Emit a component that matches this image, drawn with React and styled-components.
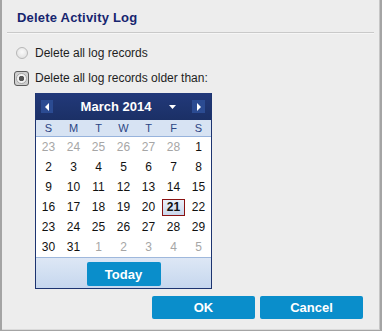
import React from 'react'
import styled, { createGlobalStyle } from 'styled-components'

const GlobalStyle = createGlobalStyle`
  html, body {
    margin: 0;
    padding: 0;
    background: #a4a4a4;
  }
  body {
    font-family: "Liberation Sans", Arial, sans-serif;
  }
`

const Dialog = styled.div`
  box-sizing: border-box;
  width: 378px;
  height: 330px;
  margin-left: 2px;
  background: #ededed;
  border-right: 1px solid #c6c6c6;
  border-bottom: 1px solid #dadada;
  display: flex;
  flex-direction: column;
`

const Title = styled.h1`
  margin: 0;
  padding: 10px 0 0 15px;
  height: 22px;
  font-size: 13px;
  letter-spacing: 0.2px;
  font-weight: bold;
  line-height: 16px;
  color: #16256f;
`

const Separator = styled.div`
  margin: 0 5px;
  height: 1px;
  background: #c9c9c9;
  border-bottom: 1px solid #f6f6f6;
`

const Options = styled.div`
  display: flex;
  flex-direction: column;
  gap: 11px;
  padding: 12px 0 0 12px;
`

const Option = styled.label`
  display: flex;
  align-items: center;
  gap: 6px;
  height: 14px;
  font-size: 12px;
  color: #1e1e1e;
`

const RadioCircle = styled.span`
  box-sizing: border-box;
  width: 12px;
  height: 12px;
  margin-left: 2px;
  margin-right: 1px;
  border-radius: 50%;
  border: 1px solid #b7b7b7;
  background: radial-gradient(circle at 50% 40%, #fafafa, #dcdcdc);
`

const RadioFocused = styled.span`
  box-sizing: border-box;
  width: 15px;
  height: 15px;
  border-radius: 3px;
  border: 1px solid #5b5b5b;
  background: #cfcfcf;
  display: flex;
  align-items: center;
  justify-content: center;

  &::after {
    content: '';
    box-sizing: border-box;
    width: 11px;
    height: 11px;
    border-radius: 50%;
    border: 1px solid #a9a9a9;
    background: radial-gradient(circle, #555 0 2.5px, #f2f2f2 3px);
  }
`

const Calendar = styled.div`
  box-sizing: border-box;
  width: 177px;
  margin: 8px 0 0 33px;
  border: 1px solid #1d3470;
  border-top: none;
  background: #fff;
`

const Header = styled.div`
  height: 27px;
  display: flex;
  align-items: center;
  padding: 0 6px 0 5px;
  background: linear-gradient(#22397a, #1b3066);
`

const NavButton = styled.span`
  width: ${p => p.$w}px;
  height: 13px;
  background: #2b4b92;
  display: flex;
  align-items: center;
  justify-content: center;
`

const MonthLabel = styled.div`
  flex: 1;
  padding-left: 10px;
  text-align: center;
  font-size: 13px;
  font-weight: bold;
  color: #fff;
`

const Caret = styled.svg`
  margin-right: 16px;
`

const DayNames = styled.div`
  display: grid;
  grid-template-columns: repeat(7, 25px);
  height: 16px;
  background: #d7e3f3;
  border-bottom: 1px solid #97b3dc;
`

const DayName = styled.span`
  text-align: center;
  font-size: 11px;
  line-height: 16px;
  color: #2c4684;
`

const Days = styled.div`
  display: grid;
  grid-template-columns: repeat(7, 25px);
  grid-auto-rows: 20px;
`

const Day = styled.span`
  display: flex;
  align-items: center;
  justify-content: center;
  font-size: 12px;
  color: ${p => (p.$other ? '#a6a6a6' : '#111')};
`

const Selected = styled.span`
  box-sizing: border-box;
  width: 23px;
  height: 17px;
  display: flex;
  align-items: center;
  justify-content: center;
  border: 1px solid #8a1212;
  background: linear-gradient(#eaf0f9, #c9d7ec);
  font-weight: bold;
  color: #111;
`

const Footer = styled.div`
  height: 31px;
  border-top: 1px solid #9fb8dc;
  background: linear-gradient(#dde7f5, #c6d7ee);
  display: flex;
  justify-content: center;
  padding-top: 4px;
  box-sizing: border-box;
`

const BlueButton = styled.button`
  box-sizing: border-box;
  width: ${p => p.$w}px;
  height: ${p => p.$h}px;
  padding: 0;
  border: none;
  border-radius: 2px;
  background: #0a8ecb;
  color: #fff;
  font-family: "Liberation Sans", Arial, sans-serif;
  font-size: 13px;
  font-weight: bold;
`

const Actions = styled.div`
  display: flex;
  justify-content: flex-end;
  gap: 5px;
  padding: 7px 16px 0 0;
`

const days = [
  [23, 1], [24, 1], [25, 1], [26, 1], [27, 1], [28, 1], [1, 0],
  [2, 0], [3, 0], [4, 0], [5, 0], [6, 0], [7, 0], [8, 0],
  [9, 0], [10, 0], [11, 0], [12, 0], [13, 0], [14, 0], [15, 0],
  [16, 0], [17, 0], [18, 0], [19, 0], [20, 0], [21, 0], [22, 0],
  [23, 0], [24, 0], [25, 0], [26, 0], [27, 0], [28, 0], [29, 0],
  [30, 0], [31, 0], [1, 1], [2, 1], [3, 1], [4, 1], [5, 1],
]

function Triangle ({ dir }) {
  const pts = dir === 'left' ? '5,0 5,8 1,4' : '1,0 1,8 5,4'
  return (
    <svg width='6' height='8' viewBox='0 0 6 8'>
      <polygon points={pts} fill='#fff' />
    </svg>
  )
}

export default function App () {
  return (
    <>
      <GlobalStyle />
      <Dialog>
        <Title>Delete Activity Log</Title>
        <Separator />
        <Options>
          <Option><RadioCircle />Delete all log records</Option>
          <Option><RadioFocused />Delete all log records older than:</Option>
        </Options>
        <Calendar>
          <Header>
            <NavButton $w={12}><Triangle dir='left' /></NavButton>
            <MonthLabel>March 2014</MonthLabel>
            <Caret width='7' height='4' viewBox='0 0 7 4'>
              <polygon points='0,0 7,0 3.5,4' fill='#fff' />
            </Caret>
            <NavButton $w={13}><Triangle dir='right' /></NavButton>
          </Header>
          <DayNames>
            {['S', 'M', 'T', 'W', 'T', 'F', 'S'].map((d, i) => <DayName key={i}>{d}</DayName>)}
          </DayNames>
          <Days>
            {days.map(([n, other], i) => (
              <Day key={i} $other={other}>
                {i === 26 ? <Selected>{n}</Selected> : n}
              </Day>
            ))}
          </Days>
          <Footer>
            <BlueButton $w={74} $h={24}>Today</BlueButton>
          </Footer>
        </Calendar>
        <Actions>
          <BlueButton $w={103} $h={23}>OK</BlueButton>
          <BlueButton $w={103} $h={23}>Cancel</BlueButton>
        </Actions>
      </Dialog>
    </>
  )
}
